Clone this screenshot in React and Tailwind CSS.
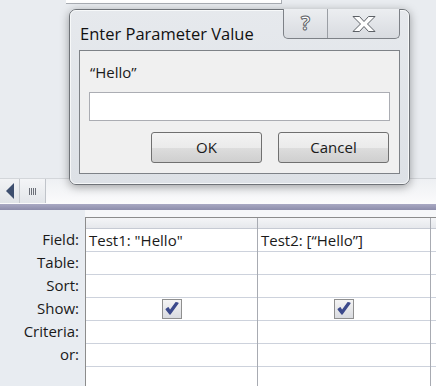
export default function App() {
  const labels = ["Field:", "Table:", "Sort:", "Show:", "Criteria:", "or:"];
  const cols = [
    { w: "w-[172px]", field: 'Test1: "Hello"' },
    { w: "w-[173px]", field: "Test2: [\u201CHello\u201D]" },
  ];
  const Check = () => (
    <div className="w-[20px] h-[20px] border border-[#8f8f8f] bg-gradient-to-b from-[#f4f4f4] to-[#d9dbe0] flex items-center justify-center">
      <svg width="16" height="16" viewBox="0 0 16 16">
        <path d="M2.2 8.2 L6 13 L14 2.2 L11.8 1.8 L6 9.8 L4.2 6.8 Z" fill="#3c4a8c" stroke="#3c4a8c" strokeWidth="1.4" strokeLinejoin="round" />
      </svg>
    </div>
  );
  return (
    <div className="w-[436px] h-[386px] overflow-hidden relative font-['Open_Sans','Noto_Sans',sans-serif] text-[#1a1a1a]">
      {/* upper background */}
      <div className="h-[178px] bg-[#e9ecf0] relative">
        <div className="ml-[66px] w-[216px] h-[4px] bg-white border-b border-r border-[#a9adb3]" />
      </div>
      {/* scroll strip */}
      <div className="h-[26px] flex bg-gradient-to-b from-[#eef0f3] to-[#fbfbfc] border-t border-[#d3d6da]">
        <div className="w-[20px] h-[24px] flex items-center justify-center bg-gradient-to-b from-[#f2f3f5] to-[#e1e4e8] border-r border-[#c6c9ce]">
          <svg width="10" height="16" viewBox="0 0 10 16">
            <path d="M9 0 L9 16 L1 8 Z" fill="#3d4e6e" />
          </svg>
        </div>
        <div className="w-[26px] h-[24px] flex items-center justify-center bg-gradient-to-b from-[#f4f5f7] to-[#e3e6ea] border-r border-[#c0c4ca]">
          <div className="flex gap-[1px]">
            <div className="w-[1px] h-[7px] bg-[#6b6f78]" />
            <div className="w-[1px] h-[7px] bg-[#6b6f78]" />
            <div className="w-[1px] h-[7px] bg-[#6b6f78]" />
            <div className="w-[1px] h-[7px] bg-[#6b6f78]" />
          </div>
        </div>
      </div>
      {/* lavender splitter */}
      <div className="h-[6px] bg-gradient-to-b from-[#a9a9c3] to-[#8d8dab]" />
      {/* design grid */}
      <div className="flex h-[176px]">
        <div className="w-[85px] bg-[#e8ecf1] pt-[18px] text-[15px]">
          {labels.map((l) => (
            <div key={l} className="h-[23px] flex items-center justify-end pr-[6px] leading-none">
              {l}
            </div>
          ))}
        </div>
        <div className="flex-1 flex flex-col bg-white">
          <div className="h-[7px] bg-[#f6f7f9]" />
          <div className="flex-1 flex border-t border-l border-[#8c8c8c]">
            {cols.map((c, i) => (
              <div key={i} className={`${c.w} border-r border-[#a8abb2] flex flex-col`}>
                <div className="h-[11px] bg-gradient-to-b from-[#f4f5f7] to-[#e6e8ec] border-b border-[#c6cad3]" />
                {labels.map((l, j) => (
                  <div key={l} className="h-[23px] border-b border-[#cdd2dc] flex items-center text-[15px] leading-none">
                    {j === 0 && <span className="pl-[3px]">{c.field}</span>}
                    {j === 3 && (
                      <div className="flex-1 flex justify-center">
                        <Check />
                      </div>
                    )}
                  </div>
                ))}
              </div>
            ))}
            <div className="flex-1 flex flex-col">
              <div className="h-[11px] bg-gradient-to-b from-[#f4f5f7] to-[#e6e8ec] border-b border-[#c6cad3]" />
              {labels.map((l) => (
                <div key={l} className="h-[23px] border-b border-[#cdd2dc]" />
              ))}
            </div>
          </div>
        </div>
      </div>

      {/* dialog window */}
      <div className="absolute left-[69px] top-[9px] w-[341px] h-[176px] rounded-[7px] border border-[#6f7378] bg-gradient-to-b from-[#e6e9ed] to-[#dde1e6] shadow-[0_2px_10px_rgba(0,0,0,0.35)]">
        <div className="absolute inset-0 rounded-[6px] border border-[#fbfcfd]/80 pointer-events-none" />
        <div className="absolute left-[10px] top-[12px] text-[16.5px] text-[#111]">Enter Parameter Value</div>
        <div className="absolute left-[213px] top-[-1px] w-[117px] h-[30px] flex border border-t-0 border-[#7d8187] rounded-b-[5px] bg-gradient-to-b from-[#eceef1] to-[#d8dbe0] overflow-hidden">
          <div className="w-[44px] border-r border-[#9a9ea4] flex items-center justify-center text-[19px] font-bold text-white [-webkit-text-stroke:1px_#5c6066] leading-none">
            ?
          </div>
          <div className="flex-1 flex items-center justify-center">
            <svg width="28" height="18" viewBox="0 0 28 18">
              <path d="M3 1.5 H9.5 L14 6.5 L18.5 1.5 H25 L17.5 9 L25 16.5 H18.5 L14 11.5 L9.5 16.5 H3 L10.5 9 Z" fill="#ffffff" stroke="#5c6066" strokeWidth="1" strokeLinejoin="round" />
            </svg>
          </div>
        </div>
        {/* client area */}
        <div className="absolute left-[9px] top-[40px] w-[321px] h-[124px] border border-[#7e8287] bg-[#f0f0f0]">
          <div className="absolute left-[10px] top-[14px] text-[15px] leading-none">{"\u201CHello\u201D"}</div>
          <div className="absolute left-[9px] top-[41px] w-[301px] h-[29px] bg-white border border-[#abadb3]" />
          <div className="absolute left-[71px] top-[81px] w-[111px] h-[31px] rounded-[3px] border border-[#707070] bg-[linear-gradient(#f3f3f3_0%,#ebebeb_50%,#dddddd_51%,#cfcfcf_100%)] flex items-center justify-center text-[15px]">
            OK
          </div>
          <div className="absolute left-[198px] top-[81px] w-[111px] h-[31px] rounded-[3px] border border-[#707070] bg-[linear-gradient(#f3f3f3_0%,#ebebeb_50%,#dddddd_51%,#cfcfcf_100%)] flex items-center justify-center text-[15px]">
            Cancel
          </div>
        </div>
      </div>
    </div>
  );
}
